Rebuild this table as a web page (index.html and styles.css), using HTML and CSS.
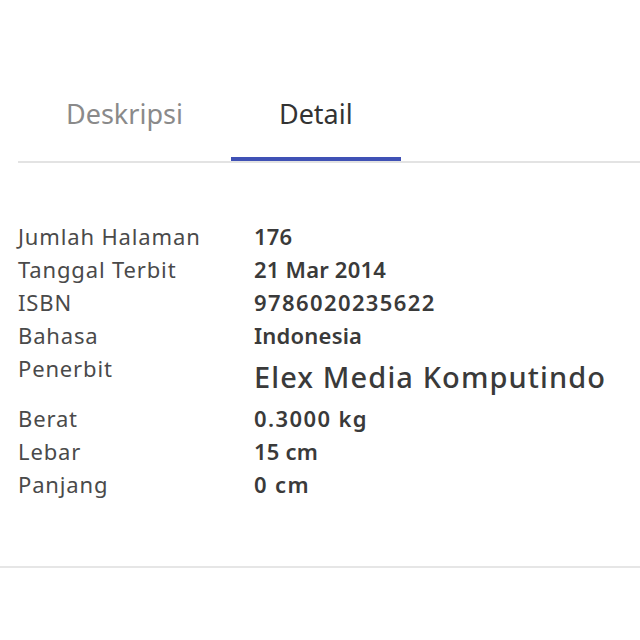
FILE: index.html
```html
<!DOCTYPE html>
<html lang="id">
<head>
<meta charset="utf-8">
<title>Detail</title>
<link rel="stylesheet" href="styles.css">
</head>
<body>
<div class="page">
  <div class="tabs">
    <div class="tab">Deskripsi</div>
    <div class="tab active">Detail</div>
  </div>
  <div class="specs">
    <div class="label">Jumlah Halaman</div><div class="value">176</div>
    <div class="label">Tanggal Terbit</div><div class="value">21 Mar 2014</div>
    <div class="label">ISBN</div><div class="value wide">9786020235622</div>
    <div class="label">Bahasa</div><div class="value">Indonesia</div>
    <div class="label">Penerbit</div><div class="value big">Elex Media Komputindo</div>
    <div class="label">Berat</div><div class="value wide">0.3000 kg</div>
    <div class="label">Lebar</div><div class="value">15 cm</div>
    <div class="label">Panjang</div><div class="value wide">0 cm</div>
  </div>
</div>
<div class="divider"></div>
</body>
</html>
```
FILE: styles.css
```css
html, body {
  margin: 0;
  padding: 0;
  background: #ffffff;
}
body {
  font-family: "Noto Sans", "Open Sans", sans-serif;
  color: #3a3a3a;
}
.page {
  padding: 60px 0 0 18px;
}
.tabs {
  display: flex;
  border-bottom: 2px solid #e3e3e3;
}
.tab {
  padding: 39px 48px 28px;
  font-size: 27px;
  line-height: 30px;
  color: #8a8a8a;
  border-bottom: 4px solid transparent;
}
.tab.active {
  color: #333333;
  border-bottom-color: #3f51b5;
}
.specs {
  display: grid;
  grid-template-columns: 236px 1fr;
  margin-top: 57px;
  margin-bottom: 65px;
  font-size: 22px;
  line-height: 33px;
}
.label {
  color: #4a4a4a;
  letter-spacing: 0.85px;
}
.value {
  font-weight: 600;
  color: #3a3a3a;
  letter-spacing: 0.2px;
}
.value.wide {
  letter-spacing: 1.4px;
}
.value.big {
  font-size: 29px;
  line-height: 50px;
  font-weight: 500;
  letter-spacing: 1.1px;
}
.divider {
  height: 2px;
  background: #e6e6e6;
}
```
